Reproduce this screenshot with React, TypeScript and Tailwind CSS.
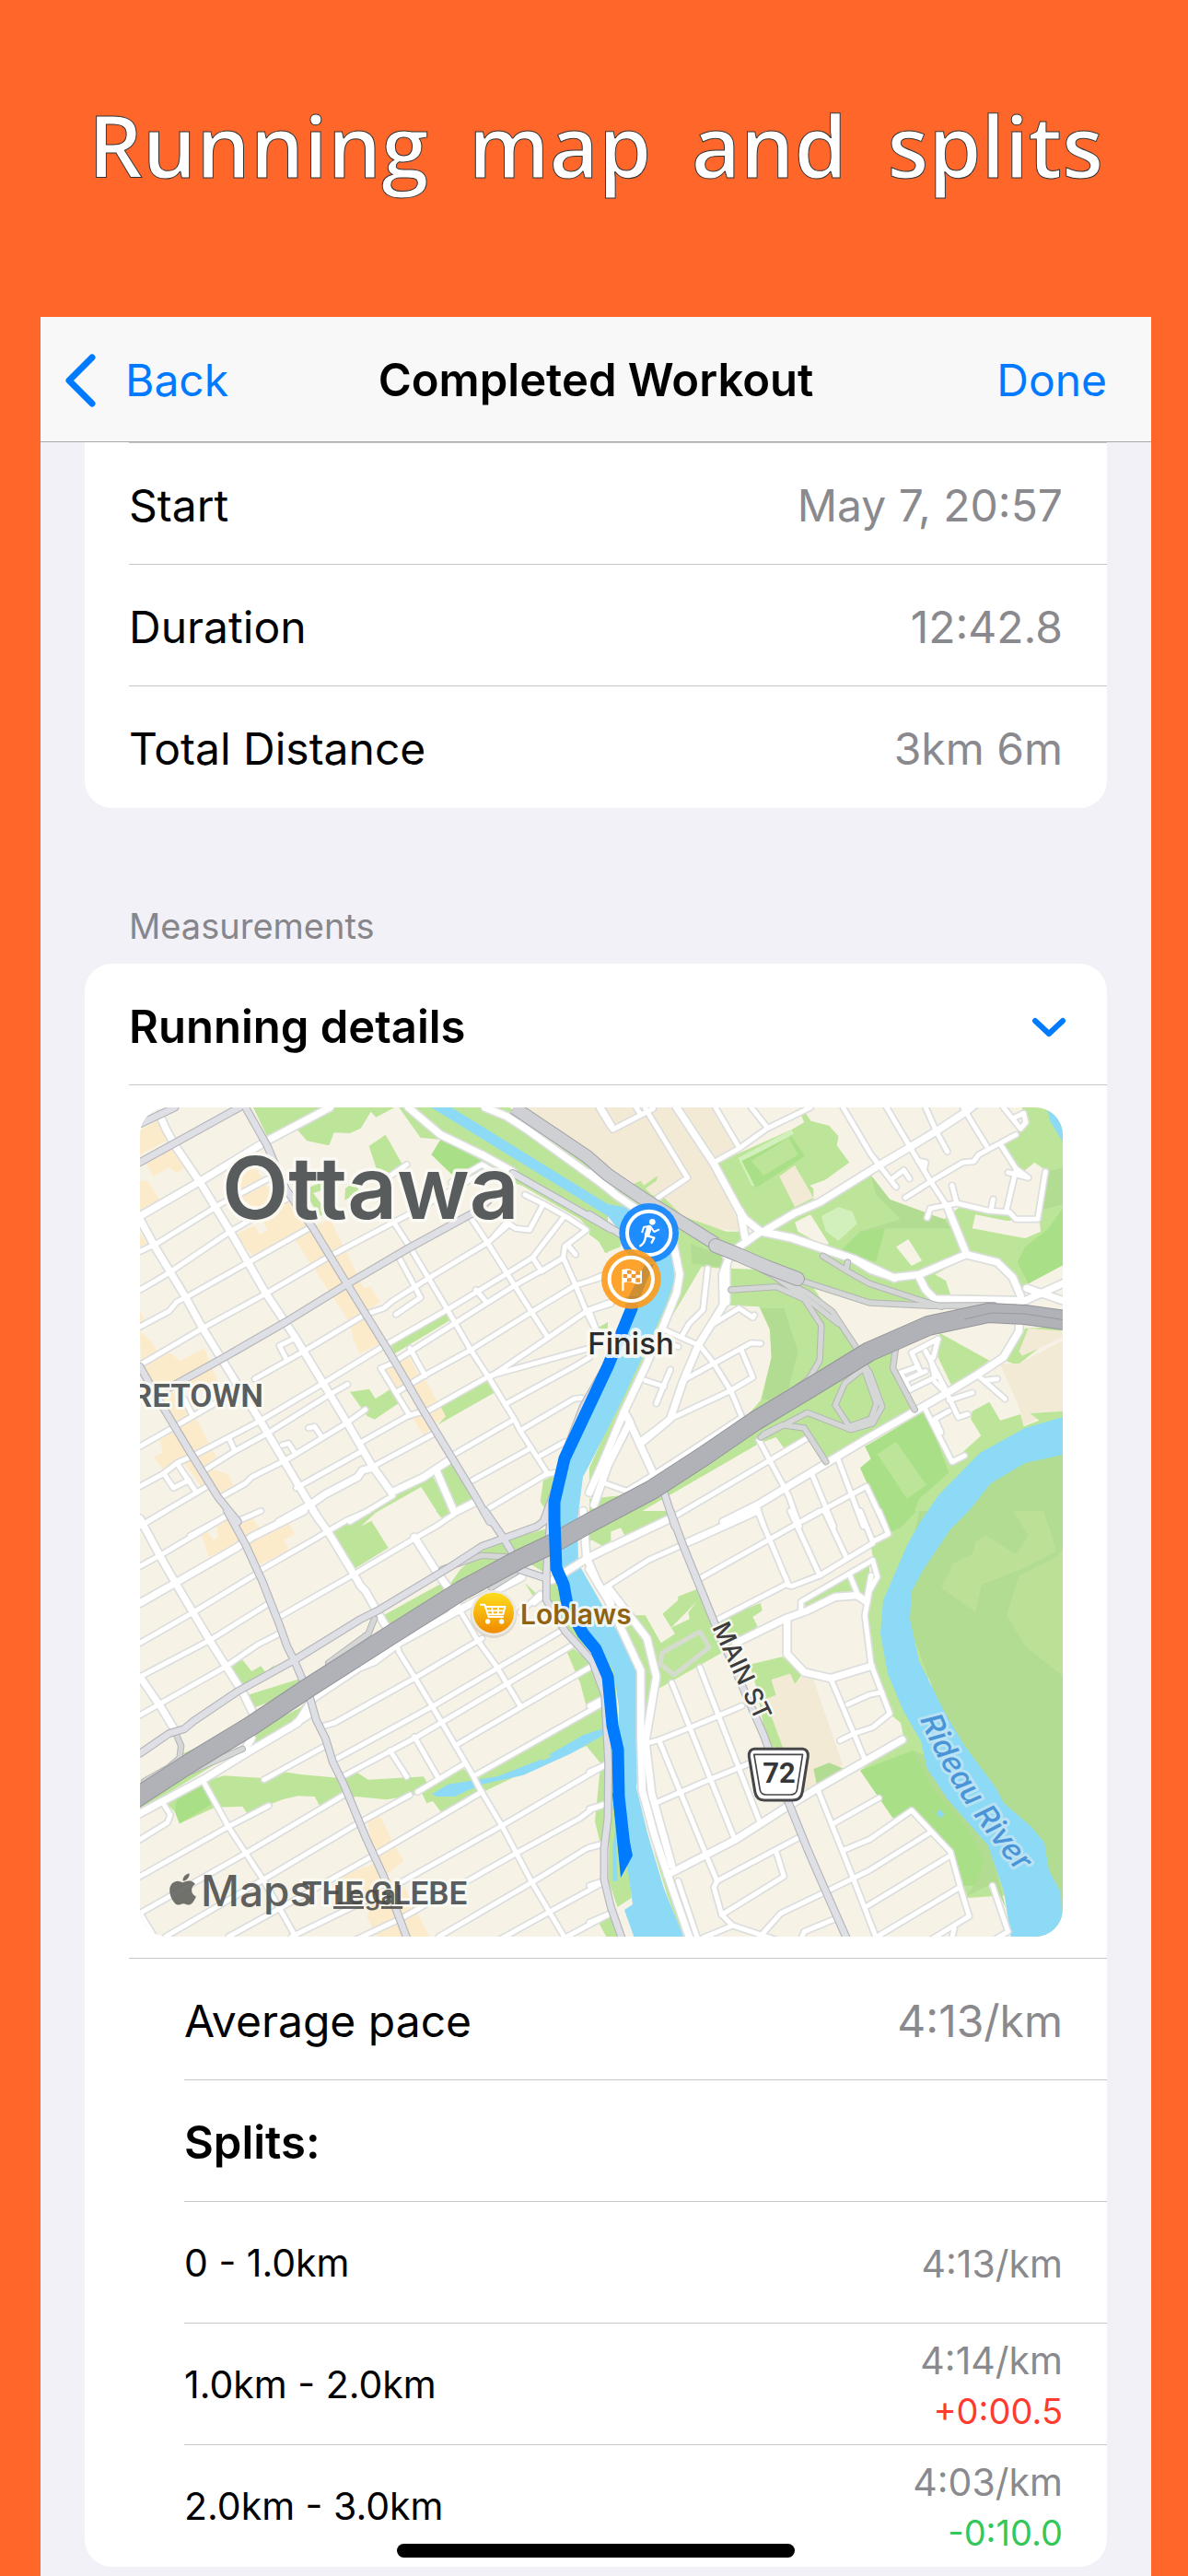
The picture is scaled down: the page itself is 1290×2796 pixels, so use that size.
import React from "react";
import { FaApple } from "react-icons/fa";

type Shape = [fill: string, points: string];
type Tile = {
  transform: string;
  areas: Shape[];
  minor: string[];
  wide: string[];
  major: string[];
  ramp: string[];
};

const PARK = "#bde599";
const DARK = "#a9df87";
const DULL = "#b2dc92";
const SHOP = "#fcebcb";
const TAN = "#f3ead6";
const LAND = "#f6f2e6";
const WATER = "#8cdaf5";
const PALE = "#d2f0bb";

const northWest: Tile = {
  transform: "translate(-12 -12) scale(.33333)",
  areas: [
    [PARK, "405,36 865,36 805,68 788,50 755,104 720,120 668,118 652,160 580,145 545,105 455,140"],
    [PARK, "880,36 1240,36 1560,270 1560,510 1550,506 1520,455 1470,400 1280,290 1180,262 1150,240 1120,262 1150,210 1015,140 950,135"],
    [DARK, "1015,140 1150,210 1060,262 985,190"],
    [PARK, "782,162 836,125 890,220 850,250 806,235"],
    [PARK, "590,295 630,280 650,300 600,315 628,352 650,335 650,380 620,390 590,340"],
    [PARK, "705,300 735,278 750,310 703,338"],
    [TAN, "1295,36 1580,36 1580,230 1500,180"],
    [PARK, "1035,700 1045,730 865,838 850,805"],
    [PARK, "720,962 783,953 803,985 850,955 880,998 800,1052 775,1040"],
    [SHOP, "36,110 100,75 130,140 36,190"],
    [SHOP, "55,220 150,165 185,230 155,250 130,230 80,262"],
    [SHOP, "36,275 60,275 100,335 36,380"],
    [SHOP, "36,445 60,480 36,490"],
    [SHOP, "360,265 410,225 445,290 520,320 590,425 400,518 348,450 410,420 425,450 452,435 435,405 455,395 365,330"],
    [SHOP, "540,465 590,430 655,400 765,625 785,618 818,670 775,700 820,805 752,838 730,790 722,740"],
    [SHOP, "36,695 55,740 36,750"],
    [SHOP, "36,765 70,795 90,828 140,838 165,862 245,820 290,930 140,960 215,1040 240,1090 285,1175 250,1205 325,1232 342,1270 300,1290 240,1275 180,1195 115,1220 80,1175 110,1160 100,1120 150,1090 110,1000 40,880"],
    [SHOP, "835,890 910,840 945,910 970,930 1032,1045 1000,1062 960,1105 920,1040 960,1010 900,930 870,950"],
    [PARK, "1015,1010 1165,925 1190,965 1005,1070 1032,1042"],
    [PARK, "1050,1190 1125,1310 1065,1345 1008,1220"],
    [PARK, "735,1380 860,1300 985,1228 1050,1355 1015,1370 952,1272 775,1372"],
    [PARK, "1350,1250 1385,1235 1360,1350 1340,1320"],
    [PARK, "1525,755 1560,735 1560,770"],
  ],
  minor: [
    "36,505 90,480 300,350 450,270", "36,630 80,605 130,575 330,440 520,330", "36,750 130,700 155,670 185,655 390,540 585,430",
    "36,875 240,755 450,640 655,520 910,385 1150,250", "410,920 570,830 770,710 830,690 860,665 980,590 1170,475 1240,415",
    "36,1140 150,1075 340,965", "36,1270 110,1230 160,1192 210,1170 430,1055 640,930 835,810 1045,690 1235,575 1315,525 1415,395",
    "250,1215 345,1155 455,1095 655,970 712,938", "300,1305 380,1260 400,1240 510,1185 700,1070 770,1020", "60,1385 255,1270",
    "200,1430 320,1365", "545,1275 760,1155", "750,1130 910,1040 980,1020 1175,910 1500,820", "870,860 1060,740 1250,620 1410,530",
    "870,965 960,910 1115,825 1315,700 1455,615 1570,580", "915,820 965,910", "870,865 820,885 915,1040", "1175,915 1360,790 1490,700 1570,675",
    "1230,1000 1450,880 1500,850", "1280,1085 1450,985 1475,982", "1060,1165 1250,1055", "1340,1170 1420,1125", "1120,1250 1310,1145",
    "1175,1340 1360,1230 1390,1225", "790,1208 1000,1095", "720,1385 860,1300", "880,525 950,655 870,710", "1130,630 1160,665",
    "1290,320 1350,350 1430,395 1490,435 1420,488 1415,525 1345,570 1315,525", "1350,350 1305,435 1260,430 1230,410 1190,455",
    "1430,485 1455,515", "1415,525 1455,615 1490,700 1520,760", "325,1110 345,1155", "545,785 490,812 510,850", "585,1080 605,1075 625,1105",
    "500,1135 520,1130 540,1160", "115,1230 145,1275 195,1250", "160,1200 220,1290", "905,222 850,260", "1050,280 1150,222 1180,240",
    "820,345 915,490 975,590 1035,690 1110,820 1175,920 1230,1010 1255,1050 1275,1090 1365,1230", "1110,390 1170,480 1240,590 1310,700 1365,785",
    "205,1035 180,985",
  ],
  wide: [
    "100,60 120,105 150,160 235,285 330,440 445,640 515,745 545,790 630,930 715,1070 790,1200 855,1290",
    "36,400 85,490 185,655 240,755 345,925 430,1060 510,1195 620,1380", "36,390 235,275 440,150 655,36",
    "490,1385 590,1330 640,1295 745,1240 760,1218 800,1208", "855,1290 960,1240 1050,1180", "1000,1215 1060,1355 1130,1320",
    "910,36 1015,125 1150,190 1250,245", "1160,36 1230,65 1300,110 1570,305", "1535,36 1570,95",
  ],
  major: ["36,90 150,36", "36,215 360,36", "130,950 310,850 510,735 705,615 910,495 1130,375 1170,340", "36,880 110,1010 200,1160 290,1305 355,1385",
    "380,36 450,160 510,300 600,430 710,610 840,820 870,870 960,1025 1045,1165 1130,1305 1175,1385", "1250,250 1570,432", "1560,870 1480,1010 1430,1140 1385,1290 1350,1385"],
  ramp: [],
};

const northEast: Tile = {
  transform: "translate(488 -12) scale(.33801 .33333)",
  areas: [
    [TAN, "0,36 400,36 485,165 400,215 490,440 400,430 300,390 0,185"],
    [PARK, "0,190 130,290 165,275 175,290 220,258 215,275 180,300 200,320 240,330 300,390 440,440 490,440 480,490 440,520 420,560 360,555 240,760 200,860 0,1300 0,1210 270,600 270,520 180,420 0,315"],
    [PARK, "0,450 40,480 50,510 100,490 100,440 0,390"],
    [DULL, "325,480 430,520 420,555 330,545"],
    [PARK, "410,220 480,185 650,108 690,85 680,60 692,52 712,80 770,95 800,130 795,160 835,215 720,300 720,335 560,430 490,370"],
    [PALE, "478,200 650,108 656,122 490,212 530,290 522,292"],
    [DARK, "490,210 650,130 692,195 535,298"],
    [PARK, "520,210 640,135 670,190 560,258"],
    [TAN, "610,260 660,225 720,330 660,360"],
    [LAND, "708,290 860,235 870,250 730,310"],
    [PARK, "440,520 560,440 720,345 905,258 965,335 1050,380 1140,400 1190,360 1340,385 1440,405 1470,245 1530,230 1530,545 1400,615 1390,680 1100,690 900,680 720,625 560,565"],
    [DULL, "905,258 965,335 1140,400 1160,430 950,430 810,500 870,440 1000,400 920,320"],
    [DARK, "810,500 870,440 950,430 920,540"],
    [PALE, "745,390 800,360 845,375 860,415 800,470 760,440"],
    [LAND, "660,410 710,385 770,480 750,485 670,440"],
    [LAND, "985,490 1025,465 1068,535 1035,552"],
    [LAND, "1240,385 1340,405 1445,400 1450,440 1400,462 1335,450 1230,430"],
    [DARK, "1530,350 1475,430 1400,490 1375,540 1410,610 1530,545"],
    [LAND, "1110,580 1200,530 1310,540 1370,590 1380,650 1160,645 1145,600"],
    [PARK, "450,560 560,565 720,625 865,830 985,800 970,880 1045,1020 765,1190 710,1120 625,1145 600,1110 545,1130 0,1450 0,1310 100,1300 210,1235 490,1060 550,990 585,850 580,760 545,685 450,680"],
    [DULL, "555,985 585,850 580,760 550,690 625,690 670,830 640,950 580,990"],
    [PARK, "1125,770 1285,860 1165,945 1120,850"],
    [PARK, "1310,160 1400,100 1390,36 1530,36 1530,260 1465,240 1430,215 1400,240 1380,240"],
    [DULL, "1470,245 1530,230 1530,350 1450,370"],
    [WATER, "1470,36 1480,80 1530,165 1530,36"],
    [PARK, "1530,750 1400,755 1380,790 1335,860 1375,875"],
    [TAN, "1318,870 1380,870 1530,790 1530,1025 1415,1030 1440,1050 1395,1070 1380,1010"],
    [TAN, "1380,830 1410,755 1530,765 1530,780 1390,845"],
    [PARK, "1530,1025 1415,1032 1445,1055 1395,1075 1385,1035 1320,1055 1285,995 1230,1025 1225,1050 1258,1105 1165,1190 1080,1020 890,1140 905,1185 870,1210 950,1385 1530,1385"],
    [DARK, "885,1140 1080,1025 1155,1225 1060,1310 1025,1400 955,1400 870,1210 905,1180"],
    [PARK, "925,1165 985,1125 1083,1265 1020,1310"],
    [DULL, "1150,1400 1300,1200 1420,1160 1530,1150 1530,1400"],
  ],
  minor: [
    "180,40 315,265 220,330", "30,36 75,108 205,40", "150,36 165,60", "400,215 480,170 570,105 710,36", "405,36 480,165", "520,36 570,100",
    "815,36 905,190 985,295", "970,270 1010,240 1028,268", "1080,36 1115,115 1150,180", "1200,36 1275,160",
    "1015,330 1100,275 1200,215 1235,212 1250,190 1370,125", "1055,210 1080,215 1075,240", "1320,155 1370,235 1410,265 1345,248", "1370,240 1340,370",
    "1330,36 1385,105 1402,85 1395,55 1360,72", "1085,395 1095,365 1180,348 1280,372 1350,378 1370,400 1440,400 1465,245", "1180,348 1165,290", "1290,370 1297,335",
    "955,36 1030,165 1095,275 1150,360", "350,805 400,870 455,960 490,1045 210,1230 120,1285 50,1260", "165,1120 260,1050 450,960 525,915 490,830",
    "310,920 520,803 550,805", "400,740 480,690 525,720 530,712", "380,560 365,695 320,740 300,775", "240,760 350,810", "260,890 235,950 215,1000", "180,925 240,945",
    "0,600 50,580", "0,695 90,662", "0,700 22,760", "545,1120 640,1300 675,1400", "705,1110 270,1370", "800,1185 880,1400", "715,1230 785,1400",
    "690,1380 890,1270 950,1400", "540,1340 560,1400", "1080,1020 1165,1190 1205,1170", "1155,1025 1110,1050 1130,1095", "1110,930 1150,970 1185,1045 1215,1035",
    "1155,990 1230,965", "1150,965 1080,830", "1120,790 1035,835 1065,900", "1120,790 1105,850", "1000,900 1055,880", "1030,955 1110,915 1095,850", "1000,900 1030,955", "1015,925 1080,895",
    "1250,910 1335,985", "1270,925 1310,920", "285,815 240,800",
  ],
  wide: [
    "280,36 400,220 480,370 500,400 550,440", "485,375 500,460", "560,440 660,380 740,345 930,225 1030,165 1120,110 1210,50 1235,30",
    "1150,360 1210,510", "440,520 550,440 650,462 850,530 905,565 980,590 1060,580 1210,515 1310,540 1360,590 1385,650 1380,765 1330,850 1240,910 1150,965 900,1110 720,1220 540,1330 430,1385",
    "550,440 650,460 850,530 980,592", "450,520 428,580 430,680 350,810 300,930 260,1050 165,1130", "440,550 440,670",
    "1060,590 1080,630 1110,660 1400,665 1530,605", "1405,625 1530,668", "0,250 90,325 200,400 270,480 290,580 280,640 240,740 180,880 110,1030 40,1200 0,1290", "110,1030 130,1060 60,1200 15,1330", "120,1040 215,1250",
  ],
  major: ["0,385 150,480", "240,1290 275,1400"],
  ramp: [
    "455,630 600,620 690,660 745,745 740,860 705,920 560,1030", "555,565 700,640 780,700 865,830", "600,590 700,660 800,740", "680,600 900,672 1100,682 1300,680",
    "750,520 830,570 900,610 1050,660 1130,685", "825,565 830,540", "550,1110 700,1030 840,1085 910,1065 940,1010 900,900 880,870", "875,890 820,935 790,1005 835,1075 905,1050 922,1000 880,880",
    "560,1100 620,1070 690,1080 760,1190", "985,810 975,885 1045,1020",
  ],
};

const southWest: Tile = {
  transform: "translate(-12 438) scale(.33333)",
  areas: [
    [PARK, "662,70 775,0 810,0 755,50 790,32 845,120 733,190"],
    [PARK, "1000,0 1050,0 1020,22"],
    [PARK, "330,500 370,485 400,522 430,505 445,525 475,500 450,545 360,595"],
    [PARK, "385,600 560,545 540,590 410,640"],
    [PARK, "820,345 1020,235 1060,250 860,380"],
    [PARK, "1080,190 1150,130 1230,95 1370,55 1370,130 1030,260"],
    [PARK, "780,470 860,420 1060,310 1000,350 870,430"],
    [PARK, "400,720 560,640 585,610 545,690 405,758"],
    [PARK, "175,790 280,745 200,810"],
    [PARK, "36,940 370,770 36,975"],
    [PARK, "125,955 250,880 310,862 440,870 505,850 560,858 690,870 740,850 780,875 960,865 980,900 1090,840 1120,860 1560,620 1560,850 1490,765 1290,850 1165,910 1020,985 990,945 970,952 955,920 840,940 740,930 620,958 605,930 550,928 500,940 385,985 370,962 280,965 165,1018 150,980"],
    [DARK, "150,980 155,940 240,895 270,955 165,1018"],
    [PARK, "1425,455 1440,440 1510,500 1550,600 1490,635 1470,560"],
    [PARK, "1360,240 1390,230 1440,330 1500,470 1400,390"],
    [PARK, "1290,235 1345,285 1330,300"],
    [PARK, "1270,150 1370,140 1360,205"],
    [PARK, "1535,840 1570,830 1570,1080 1535,1080 1518,1010"],
    [PARK, "1530,1340 1590,1310 1610,1386 1555,1386"],
    [PARK, "1500,90 1570,50 1570,130"],
    [WATER, "988,922 1040,890 1200,865 1340,810 1480,730 1555,705 1555,725 1440,790 1285,860 1150,890 1060,930 1000,930"],
    [PARK, "1342,808 1362,795 1380,798 1350,812"],
    [SHOP, "235,75 255,65 275,95 290,85 285,30 340,20 365,100 260,150"],
    [SHOP, "355,35 400,20 425,55 515,30 540,75 505,95 520,130 425,175 380,110"],
    [SHOP, "775,1000 820,995 850,1060 895,1140 830,1190 800,1130"],
    [SHOP, "665,1195 800,1150 840,1190 900,1230 930,1290 980,1390 810,1390 775,1320 800,1270 750,1215 720,1240"],
  ],
  minor: [
    "36,50 120,0", "36,180 110,140 320,15", "350,35 430,0", "36,430 210,330 415,205", "425,195 600,95 650,65 710,30 780,0", "36,540 265,420 450,305",
    "490,345 735,205 930,90 1000,50 1060,10", "36,665 310,510 420,435 490,400", "635,700 670,690 930,545 1150,415", "680,805 1000,630 1400,395", "705,860 940,735 1440,440",
    "440,875 640,765", "1070,760 1275,640 1500,510", "1130,860 1555,620", "850,780 905,865", "930,735 1005,865", "940,915 1090,825",
    "110,950 135,990 125,1015 36,1070", "36,1190 320,1030 455,960", "36,1310 380,1115 700,925", "120,1386 430,1205 750,1015 915,925", "325,1386 490,1295 800,1120 1150,915",
    "530,1386 840,1235 1215,1025 1555,825", "730,1400 890,1325 1270,1110 1470,1000 1510,970 1550,955", "1010,1386 1320,1205 1490,1100 1545,1085", "1200,1400 1380,1300 1545,1210", "1420,1390 1570,1310",
    "36,1310 85,1390", "1275,330 1340,270", "870,425 880,460 930,540 1020,690 1120,860 1140,900 1215,1025 1310,1205 1420,1390", "1070,310 1135,420 1200,510 1275,635",
    "245,885 325,1030 440,1205 545,1390", "1320,300 1345,280",
  ],
  wide: [
    "36,25 100,145 155,240 265,425 370,590 405,660", "36,540 105,640 150,715", "600,0 650,70 735,210 755,245 770,260 810,330 840,380", "930,85 1000,195 1040,250",
    "36,300 150,235 350,120 400,85 570,0", "36,985 250,870 380,790 550,690 600,610 750,510 800,490 880,430 1080,320 1280,215", "370,790 400,740", "1050,335 1070,300", "590,660 545,690",
    "1380,225 1500,150 1570,115", "1480,0 1490,150 1530,240 1570,300",
  ],
  major: [
    "320,0 380,110 435,230 490,370 515,440 540,490 570,560", "590,610 610,680 640,740 665,820 700,890 770,1060 830,1190 905,1390",
    "36,790 130,725 180,710 210,685 350,590 540,485 750,355 810,325 1050,180 1150,115 1220,90 1330,50 1370,20", "1160,0 1215,80 1245,130",
    "1375,0 1360,200 1360,290 1420,390 1510,490 1550,600 1562,820 1560,1000 1548,1100 1548,1200 1570,1290 1605,1390", "1270,190 1360,220",
  ],
  ramp: ["50,880 130,835 165,805 170,765 155,730", "800,350 780,400 650,495", "1020,190 1150,145 1240,150", "150,870 370,775", "1180,250 1260,200"],
};

const southEast: Tile = {
  transform: "translate(488 438) scale(.33801 .33333)",
  areas: [
    [PARK, "0,95 100,55 115,82 260,20 270,0 160,0 0,75"],
    [PARK, "140,340 180,340 230,430 275,400 235,335 285,290 285,278 345,255 410,355 550,300 555,325 525,345 540,375 480,430 420,465 220,580 200,700 150,900 150,530 100,410"],
    [LAND, "262,380 345,295 318,330 322,352"],
    [PARK, "515,500 620,475 685,530 660,565 645,530 585,550 600,600 550,620"],
    [TAN, "545,620 600,600 585,550 645,530 660,565 685,540 720,550 815,830 720,840 730,900 620,960"],
    [PARK, "545,620 585,670 625,780 570,760"],
    [PARK, "690,300 840,205 900,180 895,280 850,270 790,270 700,320"],
    [PARK, "945,0 1090,0 1090,800 1360,1250 1215,1260 1160,1110 1040,975 975,1000 870,845 1010,740 1000,690 970,665 900,480 890,300 925,215 905,120 960,80"],
    [DARK, "945,0 1050,0 1000,55 965,70"],
    [DARK, "870,845 1040,780 1100,900 1240,1060 1270,1140 1240,1220 1200,1220 1160,1110 1040,975 975,1000"],
    [DULL, "1040,780 1085,800 1290,1100 1360,1386 1340,1300 1300,1210 1210,1255 1240,1215 1270,1140 1220,1040 1100,900"],
    [DULL, "720,840 770,820 820,840 730,890"],
    [DULL, "1060,0 1530,0 1530,1386 1400,1386 1000,300"],
    ["#bbe096", "1530,110 1500,150 1380,210 1340,340 1400,440 1530,545"],
    ["#bbe096", "1130,250 1170,170 1230,140 1240,100 1275,80 1370,140 1410,80 1360,0 1460,0 1500,130 1400,185 1260,240 1240,330"],
    [PARK, "30,480 80,500 135,1260 90,1290 60,1200 70,800"],
    [PARK, "205,1100 270,1240 300,1386 250,1250"],
    [WATER, "1115,985 1125,972 1140,988 1128,1000"],
    [WATER, "75,1205 90,1205 85,1020 75,1100"],
  ],
  minor: [
    "50,250 190,160 300,110", "355,220 670,40 740,0", "540,0 640,240", "645,0 740,210", "755,0 825,150", "870,0 910,100 960,75 930,0", "410,355 630,240 650,245 740,210 910,105",
    "680,325 680,295 910,160 925,215 900,260 885,340 905,500 965,660 910,705 850,725 805,748", "835,205 865,280", "905,210 890,290", "775,545 885,810", "830,630 900,598 940,590",
    "355,510 550,1020", "265,560 465,1065", "225,750 375,1120 410,1205", "190,755 225,745 325,705 490,635", "215,950 385,875 520,820", "410,1205 670,1065",
    "410,1205 400,1225 425,1315 460,1350 610,1400", "425,1315 625,1190 600,1110", "365,1390 460,1350", "540,1395 615,1310 760,1240 900,1170 1090,1050", "680,1395 690,1370 785,1330",
    "735,910 845,1190 925,1400", "780,1020 930,935", "815,1105 900,1070 1035,975 1160,1110 1190,1220 1220,1320 1090,1400", "895,1285 1160,1122", "925,1386 1190,1225", "1295,1220 1345,1370 1310,1390",
    "1165,1390 1172,1360", "285,1205 350,1400", "0,635 45,610", "0,850 55,825", "0,970 50,955", "0,1095 40,1085", "0,1220 45,1205", "0,1340 70,1310", "0,510 15,500",
  ],
  wide: [
    "0,150 270,20", "310,105 540,0", "470,430 630,350 700,325 790,280 860,275 890,295", "635,350 635,465 690,525 775,545 905,505", "1005,745 730,905 640,960 470,1070 250,1185",
    "0,190 60,290 165,520 165,740 170,910 210,1060 270,1240 325,1400", "60,250 185,415 215,540 180,750 200,920 265,1155",
  ],
  major: ["260,0 300,110 400,360 560,730 640,950 700,1100 760,1240 830,1400"],
  ramp: [],
};

const tiles = [northWest, northEast, southWest, southEast];

function Lines({ layer, color, width }: { layer: "minor" | "wide" | "major" | "ramp"; color: string; width: number }) {
  return (
    <g fill="none" stroke={color} strokeWidth={width} strokeLinecap="round" strokeLinejoin="round">
      {tiles.map((tile) => (
        <g key={tile.transform} transform={tile.transform}>
          {tile[layer].map((points) => (
            <polyline key={points} points={points} />
          ))}
        </g>
      ))}
    </g>
  );
}

const HIGHWAY =
  "M-10 753 L55 711 L121 671 L181 631 L275 571 L348 525 L411 491 L445 475 L488 451 L556 415 L613 378 L667 341 L725 306 L792 265 L856 237 L921 223 L961 225 L1012 232";
const ROUTE =
  "M534 205 L534 218 L508 281 L461 381 L450 428 L450 448 L452 500 L460 518 L464 540 L481 571 L495 588 L508 618 L513 671 L519 697 L520 748 L527 812";
const CANAL =
  "M316 0 L338 0 L508 105 L549 112 L579 161 L580 188 L571 215 L547 268 L522 321 L488 388 L481 401 L475 448 L476 495 L488 516 L522 575 L539 611 L539 738 L551 788 L569 848 L591 902 L537 902 L526 871 L535 865 L528 815 L520 748 L520 651 L514 611 L481 560 L460 518 L452 500 L450 430 L461 381 L508 281 L540 210 L545 165 L508 118 Z";
const RIVER =
  "M1002 336 L961 348 L912 375 L867 421 L847 450 L833 475 L807 535 L804 571 L812 615 L829 655 L848 688 L855 718 L877 751 L921 801 L938 851 L946 902 L1002 902 L1000 852 L987 828 L982 798 L968 781 L938 755 L929 738 L894 691 L873 655 L846 601 L836 555 L838 525 L851 501 L880 458 L900 438 L924 408 L961 386 L1002 377 Z";

function RunMap() {
  return (
    <svg viewBox="0 0 1002 900" preserveAspectRatio="xMidYMid slice" className="block w-full rounded-[30px]" role="img" aria-label="Map of the run in Ottawa">
      <defs>
        <linearGradient id="cart" x1="0" y1="0" x2="0" y2="1">
          <stop offset="0" stopColor="#fede1c" />
          <stop offset="1" stopColor="#f08a00" />
        </linearGradient>
        <path id="riverLine" d="M847 664 Q882 750 970 850" />
      </defs>
      <rect width="1002" height="900" fill={LAND} />
      {tiles.map((tile) => (
        <g key={tile.transform} transform={tile.transform}>
          {tile.areas.map(([fill, points]) => (
            <polygon key={points} fill={fill} points={points} />
          ))}
        </g>
      ))}
      <path d={CANAL} fill={WATER} />
      <path d={RIVER} fill={WATER} />
      <path d="M567 592 L608 569 L618 586 L580 616 L565 604 Z" fill="none" stroke="#d5dccf" strokeWidth="5" strokeLinejoin="round" />

      <Lines layer="minor" color="#dcdddd" width={25} />
      <Lines layer="wide" color="#dcdddd" width={32} />
      <Lines layer="minor" color="#ffffff" width={15} />
      <Lines layer="wide" color="#ffffff" width={22} />
      <Lines layer="ramp" color="#b3b5b5" width={22} />
      <Lines layer="ramp" color="#d4d7d5" width={16} />
      <Lines layer="major" color="#b5b6bb" width={27} />
      <Lines layer="major" color="#dfe0e5" width={20} />
      <g fill="none" strokeLinejoin="round">
        <path d="M406 0 L485 53 L508 73 L545 98 L625 148" stroke="#9fa0a5" strokeWidth="15" />
        <path d="M406 0 L485 53 L508 73 L545 98 L625 148" stroke="#cfd0d4" strokeWidth="13" />
        <path d="M625 150 L650 160 L680 173 L714 186" stroke="#9fa0a5" strokeWidth="16" strokeLinecap="round" />
        <path d="M625 150 L650 160 L680 173 L714 186" stroke="#cfd0d4" strokeWidth="14" strokeLinecap="round" />
        <path d={HIGHWAY} stroke="#949599" strokeWidth="22" />
        <path d={HIGHWAY} stroke="#b1b2b8" strokeWidth="20" />
        <path d="M895 230 L925 223 L961 224 L1012 232" stroke="#98999e" strokeWidth="1" />
        <path d={ROUTE} stroke="#007aff" strokeWidth="13" />
      </g>
      <path d="M513 745 L524 737 L525 765 L535 812 L522 836 Z" fill="#007aff" />

      <g stroke="#fbfaf4" strokeOpacity=".9" strokeLinejoin="round" className="[paint-order:stroke]">
        <text x="89" y="121" fontSize="94" fontWeight="600" fill="#585c5d" strokeWidth="7" className="font-['Inter',sans-serif]">Ottawa</text>
        <g fontSize="35" fontWeight="600" fill="#595d5e" strokeWidth="6" className="font-['Roboto',sans-serif]">
          <text x="134" y="325" textAnchor="end">RETOWN</text>
          <text x="176" y="865">THE GLEBE</text>
        </g>
        <text x="533" y="268" textAnchor="middle" fontSize="33" fontWeight="500" fill="#2c2c2e" strokeWidth="8" className="font-['Inter',sans-serif]">Finish</text>
        <text x="413" y="561" fontSize="30" fontWeight="600" fill="#8f6310" strokeWidth="6" className="font-['Inter',sans-serif]">Loblaws</text>
        <text transform="translate(621 564) rotate(65)" fontSize="27" fontWeight="500" fill="#3c3c3e" strokeWidth="5" className="font-['Inter',sans-serif]">MAIN ST</text>
        <text fontSize="33" fontWeight="500" fontStyle="italic" fill="#4a94d8" stroke="#bfe4f3" strokeWidth="6" className="font-['Inter',sans-serif]">
          <textPath href="#riverLine">Rideau River</textPath>
        </text>
      </g>
      <g fill="#4b4b49" fillOpacity=".88" className="font-['Inter',sans-serif]">
        <FaApple x="27" y="829" size={39} color="#5f5f5b" />
        <text x="66" y="867" fontSize="46" fontWeight="500">Maps</text>
        <text x="210" y="865" fontSize="29" fontWeight="500" textDecoration="underline">Legal</text>
      </g>

      <g transform="translate(488 438) scale(.33801 .33333)" strokeLinejoin="round">
        <path d="M530 775 H685 Q704 777 702 800 L684 915 Q680 942 652 942 H562 Q537 942 532 915 L513 800 Q511 777 530 775 Z" fill="#ffffff" stroke="#47474a" strokeWidth="9" />
        <path d="M529 793 H685 L667 908 Q664 924 646 924 H568 Q551 924 548 908 Z" fill="none" stroke="#47474a" strokeWidth="5" />
      </g>
      <text x="694" y="733" textAnchor="middle" fontSize="31" fontWeight="700" fill="#37373a" className="font-['Roboto',sans-serif]">72</text>

      <g transform="translate(348 498) scale(.33333)">
        <circle cx="108" cy="158" r="76" fill="#000000" fillOpacity=".1" />
        <circle cx="108" cy="152" r="74" fill="#ece9e2" />
        <circle cx="108" cy="152" r="66" fill="url(#cart)" />
        <g fill="none" stroke="#ffffff" strokeWidth="6" strokeLinecap="round" strokeLinejoin="round">
          <path d="M66 125 H79 L92 165 H138" />
          <path d="M82 132 H145 L139 157 H90" />
          <path d="M86 145 H142 M102 132 L106 157 M124 132 L122 157" strokeWidth="5" />
        </g>
        <circle cx="89" cy="180" r="8" fill="#ffffff" />
        <circle cx="134" cy="180" r="8" fill="#ffffff" />
      </g>

      <g transform="translate(448 78) scale(.33333)">
        <circle cx="314" cy="175" r="97" fill="#1385ff" fillOpacity=".92" />
        <circle cx="314" cy="175" r="71" fill="none" stroke="#ffffff" strokeWidth="12" />
        <circle cx="325" cy="139" r="10" fill="#ffffff" />
        <g fill="none" stroke="#ffffff" strokeLinecap="round" strokeLinejoin="round">
          <path d="M315 158 L308 180" strokeWidth="17" />
          <path d="M312 153 L297 156 L292 172" strokeWidth="6" />
          <path d="M321 157 L331 171 L346 164" strokeWidth="6" />
          <path d="M310 184 L331 191 L323 206" strokeWidth="7" />
          <path d="M303 187 Q301 207 286 217" strokeWidth="7" />
        </g>
        <circle cx="256" cy="325" r="97" fill="#fe9a1a" fillOpacity=".9" />
        <path d="M300 280 L330 275 L280 396 L240 398 Z" fill="#8a7440" fillOpacity=".4" />
        <circle cx="256" cy="325" r="71" fill="none" stroke="#ffffff" strokeWidth="12" />
        <path d="M229 297 V361" stroke="#ffffff" strokeWidth="7" strokeLinecap="round" />
        <path d="M229 295 Q244 288 260 296 T291 297 V338 Q276 345 260 337 T229 339 Z" fill="#ffffff" />
        <path d="M243 296 H257 V308 H243 Z M271 300 H285 V311 H271 Z M230 309 H243 V321 H230 Z M257 309 H271 V321 H257 Z M243 322 H257 V333 H243 Z M271 322 H285 V335 H271 Z" fill="#f0962a" />
      </g>
    </svg>
  );
}

function Row({ label, value, last = false }: { label: string; value: string; last?: boolean }) {
  return (
    <div className={`ml-12 flex h-[132px] items-center justify-between pt-1 pr-12 ${last ? "" : "border-b border-[#c6c6c8]"}`}>
      <dt>{label}</dt>
      <dd className="text-[#8a8a8e]">{value}</dd>
    </div>
  );
}

const splits = [
  { range: "0 - 1.0km", pace: "4:13/km", delta: "", slower: false },
  { range: "1.0km - 2.0km", pace: "4:14/km", delta: "+0:00.5", slower: true },
  { range: "2.0km - 3.0km", pace: "4:03/km", delta: "-0:10.0", slower: false },
];

export default function App() {
  return (
    <div className="flex min-h-screen flex-col bg-[#ff672a] pr-10 pl-11 font-['Inter',sans-serif] text-[48px] text-black">
      <h1 className="flex h-[344px] items-center justify-between px-[52px] pb-7 font-['Open_Sans',sans-serif] text-[92px] font-semibold text-white [-webkit-text-stroke:1px_#333]">
        <span>Running</span> <span>map</span> <span>and</span> <span>splits</span>
      </h1>
      <main className="relative flex-1 bg-[#f2f1f7] pb-[10px]">
        <header className="grid h-[136px] grid-cols-[1fr_auto_1fr] items-center border-b border-[#a9a9ad] bg-[#f8f8f8] px-[26px] pt-[2px]">
          <button type="button" className="flex items-center gap-8 text-[#007aff]">
            <svg viewBox="0 0 34 58" className="h-[58px] w-[34px]" fill="none" stroke="currentColor" strokeWidth="7" strokeLinecap="round" strokeLinejoin="round">
              <path d="M30 4 L5 29 L30 54" />
            </svg>
            Back
          </button>
          <h2 className="text-[49px] font-semibold">Completed Workout</h2>
          <button type="button" className="mr-[22px] justify-self-end text-[#007aff]">Done</button>
        </header>

        <div className="mx-12 rounded-b-[30px] bg-white">
          <hr className="ml-12 border-[#c6c6c8]" />
          <dl>
            <Row label="Start" value="May 7, 20:57" />
            <Row label="Duration" value="12:42.8" />
            <Row label="Total Distance" value="3km 6m" last />
          </dl>
        </div>

        <h3 className="mt-[103px] mb-4 ml-24 text-[38px] leading-[50px] text-[#86868b]">Measurements</h3>

        <section className="mx-12 rounded-[30px] bg-white">
          <button type="button" aria-expanded="true" className="flex h-[132px] w-full items-center pl-12 text-left text-[49px] font-semibold">
            <span className="flex h-full flex-1 items-center justify-between border-b border-[#c6c6c8] pt-[6px] pr-11">
              Running details
              <svg viewBox="0 0 38 22" className="h-[22px] w-[38px] text-[#007aff]" fill="none" stroke="currentColor" strokeWidth="6" strokeLinecap="round" strokeLinejoin="round">
                <path d="M4 4 L19 18 L34 4" />
              </svg>
            </span>
          </button>
          <div className="ml-12 border-b border-[#c6c6c8] pt-6 pr-12 pb-[23px] pl-3">
            <RunMap />
          </div>
          <dl className="ml-[60px]">
            <Row label="Average pace" value="4:13/km" />
          </dl>
          <h4 className="ml-[108px] flex h-[132px] items-center border-b border-[#c6c6c8] pt-1 text-[49px] font-semibold">Splits:</h4>
          <dl className="ml-[108px] text-[41px]">
            {splits.map((split) => (
              <div key={split.range} className="flex h-[132px] items-center justify-between border-b border-[#c6c6c8] pt-[2px] pr-12 last:border-b-0">
                <dt>{split.range}</dt>
                <dd className="text-right leading-[56px] text-[#8a8a8e]">
                  <p>{split.pace}</p>
                  {split.delta && <p className={split.slower ? "text-[38px] leading-[54px] text-[#ff3b30]" : "text-[38px] leading-[54px] text-[#34c759]"}>{split.delta}</p>}
                </dd>
              </div>
            ))}
          </dl>
        </section>
        <div className="absolute bottom-5 left-1/2 h-[15px] w-[432px] -translate-x-1/2 rounded-full bg-black" />
      </main>
    </div>
  );
}
